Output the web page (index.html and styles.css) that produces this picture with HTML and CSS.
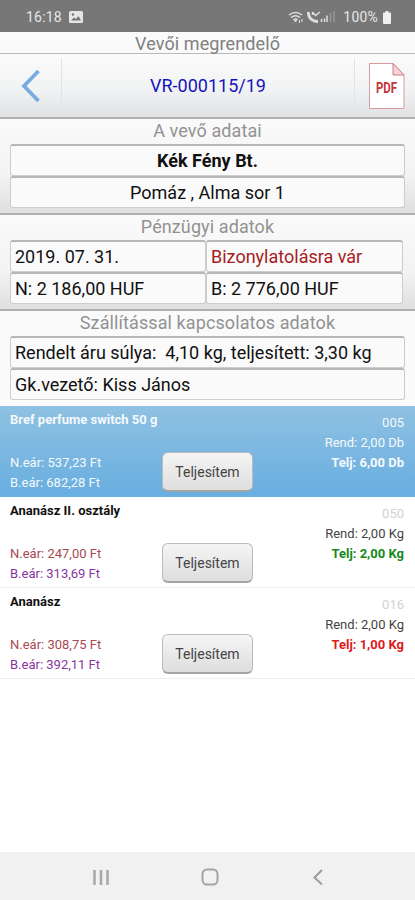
FILE: index.html
```
<!DOCTYPE html>
<html lang="hu">
<head>
  <meta charset="UTF-8" />
  <meta name="viewport" content="width=device-width, initial-scale=1" />
  <title>Vevői megrendelő</title>
  <link rel="stylesheet" href="styles.css">
</head>
<body>

  <div class="statusbar">
    <span class="clock">16:18</span>
    <svg class="picture" width="14" height="12" viewBox="0 0 14 12">
      <rect width="14" height="12" rx="1.5" fill="#e6e6e6" />
      <path d="M2 9.5l3-3 2 1.5 2.5-3L12 9.5z" fill="#777" />
      <circle cx="4" cy="3.5" r="1.2" fill="#777" />
    </svg>
    <svg class="signals" width="48" height="14" viewBox="0 0 48 14" fill="none" stroke="#dedede">
      <path d="M1 5q6.500-5 13 0M3 7.500q4.500-3.500 9 0M5.500 9.800q2-1.500 4 0" stroke-width="1.500" />
      <path d="M6.500 10.500h2l-1 1.500zM11.500 10v3M14 9v3" stroke-width="1" />
      <path d="M20.500 2C20 7.500 23.500 11.500 30 11.500" stroke-width="2.800" />
      <path d="M24.500 5V2M24.500 2l3 3.500L32 2" stroke-width="1.400" />
      <path d="M33.500 9v3M36.500 8.500v3.500M39 5.500v6.500" stroke-width="1.500" />
      <path d="M42.500 3v9M46 1v11" stroke="#999" stroke-width="1.500" />
    </svg>
    <span class="percent">100%</span>
    <svg width="8" height="13" viewBox="0 0 8 13">
      <path d="M2.500 0h3v1.500H7q1 0 1 1V12q0 1-1 1H1q-1 0-1-1V2.500q0-1 1-1h1.500z" fill="#f0f0f0" />
    </svg>
  </div>

  <div class="title">Vevői megrendelő</div>

  <div class="toolbar">
    <div class="back">
      <svg width="20" height="34" viewBox="0 0 20 34">
        <path d="M17.500 2L3 17l14.500 15" fill="none" stroke="#78ace0" stroke-width="3.800" />
      </svg>
    </div>
    <div class="number">VR-000115/19</div>
    <div class="pdf">
      <svg width="36" height="46" viewBox="0 0 36 46">
        <path d="M.5.5h23.500L35 12v33.500H.5z" fill="#fff" stroke="#d99a9f" />
        <path d="M24 .5V12h11z" fill="#f6d5da" stroke="#cf7d84" />
        <text class="pdf-text" x="7" y="30" textLength="21" lengthAdjust="spacingAndGlyphs">PDF</text>
      </svg>
    </div>
  </div>

  <div class="section">
    <h3>A vevő adatai</h3>
    <div class="field center"><strong>Kék Fény Bt.</strong></div>
    <div class="field center">Pomáz , Alma sor 1</div>
  </div>

  <div class="section">
    <h3>Pénzügyi adatok</h3>
    <div class="fields">
      <div class="field">2019. 07. 31.</div>
      <div class="field state">Bizonylatolásra vár</div>
      <div class="field">N: 2 186,00 HUF</div>
      <div class="field">B: 2 776,00 HUF</div>
    </div>
  </div>

  <div class="section last">
    <h3>Szállítással kapcsolatos adatok</h3>
    <div class="field">Rendelt áru súlya:&nbsp; 4,10 kg, teljesített: 3,30 kg</div>
    <div class="field">Gk.vezető: Kiss János</div>
  </div>

  <div class="items">
    <div class="item selected">
      <div class="left">
        <div class="name">Bref perfume switch 50 g</div>
        <div class="net">N.eár: 537,23 Ft</div>
        <div class="gross">B.eár: 682,28 Ft</div>
      </div>
      <button>Teljesítem</button>
      <div class="right">
        <div class="code">005</div>
        <div>Rend: 2,00 Db</div>
        <div class="done">Telj: 6,00 Db</div>
      </div>
    </div>
    <div class="item">
      <div class="left">
        <div class="name">Ananász II. osztály</div>
        <div class="net">N.eár: 247,00 Ft</div>
        <div class="gross">B.eár: 313,69 Ft</div>
      </div>
      <button>Teljesítem</button>
      <div class="right">
        <div class="code">050</div>
        <div>Rend: 2,00 Kg</div>
        <div class="done">Telj: 2,00 Kg</div>
      </div>
    </div>
    <div class="item">
      <div class="left">
        <div class="name">Ananász</div>
        <div class="net">N.eár: 308,75 Ft</div>
        <div class="gross">B.eár: 392,11 Ft</div>
      </div>
      <button>Teljesítem</button>
      <div class="right">
        <div class="code">016</div>
        <div>Rend: 2,00 Kg</div>
        <div class="done missing">Telj: 1,00 Kg</div>
      </div>
    </div>
  </div>

  <div class="navbar">
    <svg width="18" height="18" viewBox="0 0 18 18">
      <path d="M2.500 2v15M9 2v15M15.500 2v15" stroke="#a8a8a8" stroke-width="2.500" />
    </svg>
    <svg width="18" height="18" viewBox="0 0 18 18">
      <rect x="1.500" y="1.500" width="15" height="15" rx="4.500" fill="none" stroke="#a4a4a4" stroke-width="2" />
    </svg>
    <svg width="18" height="18" viewBox="0 0 18 18">
      <path d="M13 2L5.500 9.500 13 16.500" fill="none" stroke="#9c9c9c" stroke-width="2" />
    </svg>
  </div>

</body>
</html>
```
FILE: styles.css
```
* {
  box-sizing: border-box;
}
body {
  margin: 0;
  height: 900px;
  display: flex;
  flex-direction: column;
  overflow: hidden;
  background: #fff;
  color: #111;
  font-family: Roboto, "Liberation Sans", sans-serif;
  font-size: 18px;
}
.statusbar {
  height: 32px;
  padding: 2px 24px 0 26px;
  display: flex;
  align-items: center;
  background: #777;
  color: #e6e6e6;
  font-size: 14px;
  letter-spacing: 0.2px;
}
.statusbar .picture {
  margin-left: 7px;
}
.statusbar .signals {
  margin-left: auto;
}
.statusbar .percent {
  margin: 0 5px 0 7px;
}
.title {
  height: 22px;
  border-bottom: 1px solid #bbb;
  background: #fafafa;
  color: #808080;
  line-height: 24px;
  text-align: center;
  letter-spacing: 0.1px;
}
.toolbar {
  height: 65px;
  display: flex;
  align-items: center;
  border-bottom: 2px solid #b0b0b0;
  background: linear-gradient(#fbfbfb, #f2f3f4 55%, #dfe1e2);
}
.back, .pdf {
  height: 56px;
  width: 62px;
  display: flex;
  align-items: center;
  justify-content: center;
  border-right: 1px solid #e2e3e4;
}
.pdf {
  width: 61px;
  padding-left: 4px;
  border-right: 0;
  border-left: 1px solid #e2e3e4;
}
.number {
  flex: 1;
  color: #1515bb;
  text-align: center;
}
.pdf-text {
  fill: #c2333a;
  font-size: 15px;
  font-weight: bold;
}
.section {
  height: 96px;
  padding: 0 10px;
  border-bottom: 2px solid #b0b0b0;
  background: linear-gradient(#fafafa, #f3f3f4 60%, #dedfe0);
}
.section.last {
  height: 95px;
  border-bottom: 0;
  background: #fafafa;
}
.section h3 {
  height: 25px;
  margin: 0;
  color: #929292;
  font-size: 18px;
  font-weight: normal;
  line-height: 24px;
  text-align: center;
  letter-spacing: 0.1px;
}
.field {
  height: 32px;
  padding-left: 4px;
  border: 1px solid #ccc;
  border-top: 2px solid #b6b6b6;
  border-radius: 3px;
  background: #fafafa;
  line-height: 29px;
  white-space: nowrap;
}
.field.center {
  padding: 0;
  text-align: center;
}
.fields {
  display: grid;
  grid-template-columns: 196px 197px;
}
.field.state {
  color: #a61c22;
}
.item {
  height: 91px;
  display: flex;
  position: relative;
  justify-content: space-between;
  padding: 4px 11px 0 10px;
  border-bottom: 1px solid #eee;
  font-size: 13px;
  line-height: 20px;
}
.item .name {
  height: 43px;
  font-weight: bold;
}
.item .net {
  color: #a84a52;
}
.item .gross {
  color: #8a359e;
}
.item .right {
  padding-top: 3px;
  color: #444;
  text-align: right;
}
.item .right .code {
  color: #d2d2d2;
}
.item .right .done {
  color: #148a1c;
  font-weight: bold;
}
.item .right .missing {
  color: #e01820;
}
.item.selected {
  border-bottom-color: #6aafe0;
  background: linear-gradient(#8fc1e2, #68aee0);
}
.item.selected div, .item.selected .right .code, .item.selected .right .done {
  color: #f4f9fd;
}
.item button {
  position: absolute;
  left: 162px;
  top: 46px;
  width: 91px;
  height: 40px;
  padding: 0;
  border: 1px solid #bbb;
  border-bottom: 2px solid #a4a4a4;
  border-radius: 6px;
  background: linear-gradient(#f5f5f5, #dedede);
  color: #444;
  font-family: inherit;
  font-size: 14px;
}
.navbar {
  height: 48px;
  margin-top: auto;
  padding: 2px 88px 0 92px;
  display: flex;
  align-items: center;
  justify-content: space-between;
  background: #f1f1f1;
}
```
